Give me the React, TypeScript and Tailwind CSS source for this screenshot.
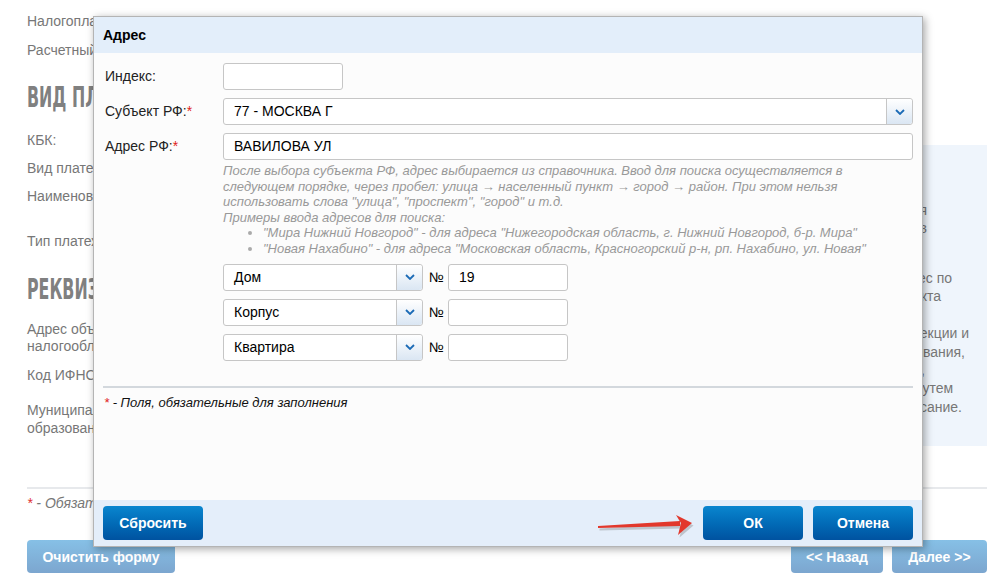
import React from 'react'

function Chevron() {
  return (
    <svg width="10" height="6" viewBox="0 0 10 6">
      <path d="M1 1l4 4 4-4" fill="none" stroke="#1b6bb6" strokeWidth="1.8" />
    </svg>
  )
}

function SelectBox({ value, className }: { value: string; className?: string }) {
  return (
    <div className={`flex h-[27px] rounded-[3px] border border-[#c6c6c6] bg-white ${className ?? ''}`}>
      <div className="flex flex-1 items-center pl-[10px] text-[14px] text-black">{value}</div>
      <div className="flex w-[26px] items-center justify-center rounded-r-[3px] border-l border-[#c6c6c6] bg-linear-to-b from-white to-[#dae6f3]">
        <Chevron />
      </div>
    </div>
  )
}

function TextBox({ value, className }: { value?: string; className?: string }) {
  return (
    <div className={`flex h-[27px] items-center rounded-[3px] border border-[#c6c6c6] bg-white pl-[10px] text-[14px] text-black ${className ?? ''}`}>
      {value}
    </div>
  )
}

function BlueButton({ children, className }: { children: React.ReactNode; className?: string }) {
  return (
    <button
      type="button"
      className={`h-[34px] rounded-[4px] bg-linear-to-b from-[#0a86cf] to-[#0052a0] text-[14px] font-bold text-white ${className ?? ''}`}
    >
      {children}
    </button>
  )
}

function PaleButton({ children, className }: { children: React.ReactNode; className?: string }) {
  return (
    <button
      type="button"
      className={`h-[33px] rounded-[4px] bg-linear-to-b from-[#86c0e6] to-[#7ca6cf] text-[14px] font-bold text-white ${className ?? ''}`}
    >
      {children}
    </button>
  )
}

const hintLines = [
  { text: 'Информация для заполнения', pr: 'pr-[60px]' },
  { text: 'реквизитов', pr: 'pr-[60px]' },
]

const hintLines2 = [
  { text: 'Укажите адрес по', pr: 'pr-[35px]' },
  { text: 'месту нахождения объекта', pr: 'pr-[46px]' },
  { text: 'налогообложения', pr: 'pr-[90px]' },
  { text: 'налоговой инспекции и', pr: 'pr-[18px]' },
  { text: 'муниципального образования,', pr: 'pr-[22px]' },
  { text: 'ОКТМО,', pr: 'pr-[62px]' },
  { text: 'заполняются автоматически путем', pr: 'pr-[42px]' },
  { text: 'и их описание.', pr: 'pr-[25px]' },
]

function Heading({ children }: { children: React.ReactNode }) {
  return (
    <div className="h-[30px] origin-left scale-x-[0.8] scale-y-[1.3] font-['Liberation_Sans_Narrow','DejaVu_Sans_Condensed',sans-serif] text-[22px] leading-[30px] font-bold whitespace-nowrap text-[#808080]">
      {children}
    </div>
  )
}

export default function App() {
  return (
    <div className="relative h-[584px] w-[1003px] overflow-hidden bg-white font-['Liberation_Sans',Arial,sans-serif]">
      {/* page under the dialog */}
      <div className="pt-[12px] pr-[16px] pl-[27px] text-[14px] leading-[18px] text-[#777]">
        <div>Налогоплательщик:</div>
        <div className="mt-[11px]">Расчетный документ:</div>
        <div className="mt-[24px]">
          <Heading>ВИД ПЛАТЕЖА</Heading>
        </div>
        <div className="flex">
          <div className="flex-1 pt-[18px]">
            <div>КБК:</div>
            <div className="mt-[10px]">Вид платежа:</div>
            <div className="mt-[10px]">Наименование платежа:</div>
            <div className="mt-[27px]">Тип платежа:</div>
            <div className="mt-[25px]">
              <Heading>РЕКВИЗИТЫ ПЛАТЕЖА</Heading>
            </div>
            <div className="mt-[16px] leading-[17px]">
              Адрес объекта
              <br />
              налогообложения:
            </div>
            <div className="mt-[11px]">Код ИФНС:</div>
            <div className="mt-[17px]">
              Муниципальное
              <br />
              образование:
            </div>
          </div>
          <div className="mt-[32px] h-[301px] w-[260px] bg-[#eff5fc] pt-[56px] whitespace-nowrap">
            {hintLines.map((l) => (
              <div key={l.text} className={`text-right ${l.pr}`}>
                {l.text}
              </div>
            ))}
            <div className="mt-[32px] leading-[18.4px]">
              {hintLines2.map((l) => (
                <div key={l.text} className={`text-right ${l.pr}`}>
                  {l.text}
                </div>
              ))}
            </div>
          </div>
        </div>
        <div className="mt-[41px] h-[2px] bg-[#e7e9ec]" />
        <div className="mt-[5px] italic">
          <span className="text-[#e03030]">*</span> - Обязательные для заполнения поля
        </div>
        <div className="mt-[28px] flex items-center">
          <PaleButton className="w-[148px]">Очистить форму</PaleButton>
          <div className="ml-auto flex gap-[9px]">
            <PaleButton className="w-[92px]">&lt;&lt; Назад</PaleButton>
            <PaleButton className="w-[95px]">Далее &gt;&gt;</PaleButton>
          </div>
        </div>
      </div>

      {/* dialog */}
      <div className="absolute top-[16px] left-[93px] flex h-[531px] w-[830px] flex-col border border-[#b4b4b4] shadow-[2px_2px_8px_rgba(0,0,0,0.35)]">
        <div className="flex h-[36px] items-center bg-[#e3eefa] px-[9px] text-[14px] font-bold text-black">Адрес</div>

        <div className="flex-1 bg-[#fcfcfc] pt-[10px] pr-[9px] pl-[9px] text-[14px] text-[#222]">
          <div className="flex items-center">
            <div className="w-[120px] pl-[2px]">Индекс:</div>
            <TextBox className="w-[120px]" />
          </div>
          <div className="mt-[8px] flex items-center">
            <div className="w-[120px] pl-[2px]">
              Субъект РФ:<span className="text-[#e02020]">*</span>
            </div>
            <SelectBox value="77 - МОСКВА Г" className="flex-1" />
          </div>
          <div className="mt-[8px] flex items-center">
            <div className="w-[120px] pl-[2px]">
              Адрес РФ:<span className="text-[#e02020]">*</span>
            </div>
            <TextBox value="ВАВИЛОВА УЛ" className="flex-1" />
          </div>

          <div className="mt-[3px] ml-[120px] text-[13px] leading-[15.6px] text-[#999] italic">
            После выбора субъекта РФ, адрес выбирается из справочника. Ввод для поиска осуществляется в
            <br />
            следующем порядке, через пробел: улица → населенный пункт → город → район. При этом нельзя
            <br />
            использовать слова "улица", "проспект", "город" и т.д.
            <br />
            Примеры ввода адресов для поиска:
            <ul className="list-disc pl-[40px] marker:text-[#aaa]">
              <li>"Мира Нижний Новгород" - для адреса "Нижегородская область, г. Нижний Новгород, б-р. Мира"</li>
              <li>"Новая Нахабино" - для адреса "Московская область, Красногорский р-н, рп. Нахабино, ул. Новая"</li>
            </ul>
          </div>

          <div className="mt-[7px] ml-[120px] flex flex-col gap-[8px]">
            {[
              { kind: 'Дом', num: '19' },
              { kind: 'Корпус', num: '' },
              { kind: 'Квартира', num: '' },
            ].map((r) => (
              <div key={r.kind} className="flex items-center">
                <SelectBox value={r.kind} className="w-[200px]" />
                <span className="ml-[6px] w-[19px] text-black">№</span>
                <TextBox value={r.num} className="w-[120px]" />
              </div>
            ))}
          </div>

          <div className="mt-[25px] h-[2px] bg-[#d3d8dd]" />
          <div className="mt-[5px] pl-[1px] text-[13px] text-[#111] italic">
            <span className="text-[#e02020]">*</span> - Поля, обязательные для заполнения
          </div>
        </div>

        <div className="flex h-[46px] items-start bg-[#e4eefa] px-[9px] pt-[6px]">
          <BlueButton className="w-[100px]">Сбросить</BlueButton>
          <div className="ml-auto flex gap-[10px]">
            <BlueButton className="w-[100px]">ОК</BlueButton>
            <BlueButton className="w-[100px]">Отмена</BlueButton>
          </div>
        </div>
      </div>

      {/* red pointer arrow */}
      <svg className="absolute top-[510px] left-[594px]" width="102" height="30" viewBox="0 0 102 30">
        <g fill="#7a7a7a" opacity="0.35" transform="translate(1.5 2.5)">
          <polygon points="4,16 86,11 86,16 4,18" />
          <polygon points="82,5 98,13 84,25 87,13" />
        </g>
        <polygon points="4,16 86,11 86,16 4,18" fill="#e2382c" />
        <polygon points="82,5 98,13 84,25 87,13" fill="#e2382c" />
      </svg>
    </div>
  )
}
